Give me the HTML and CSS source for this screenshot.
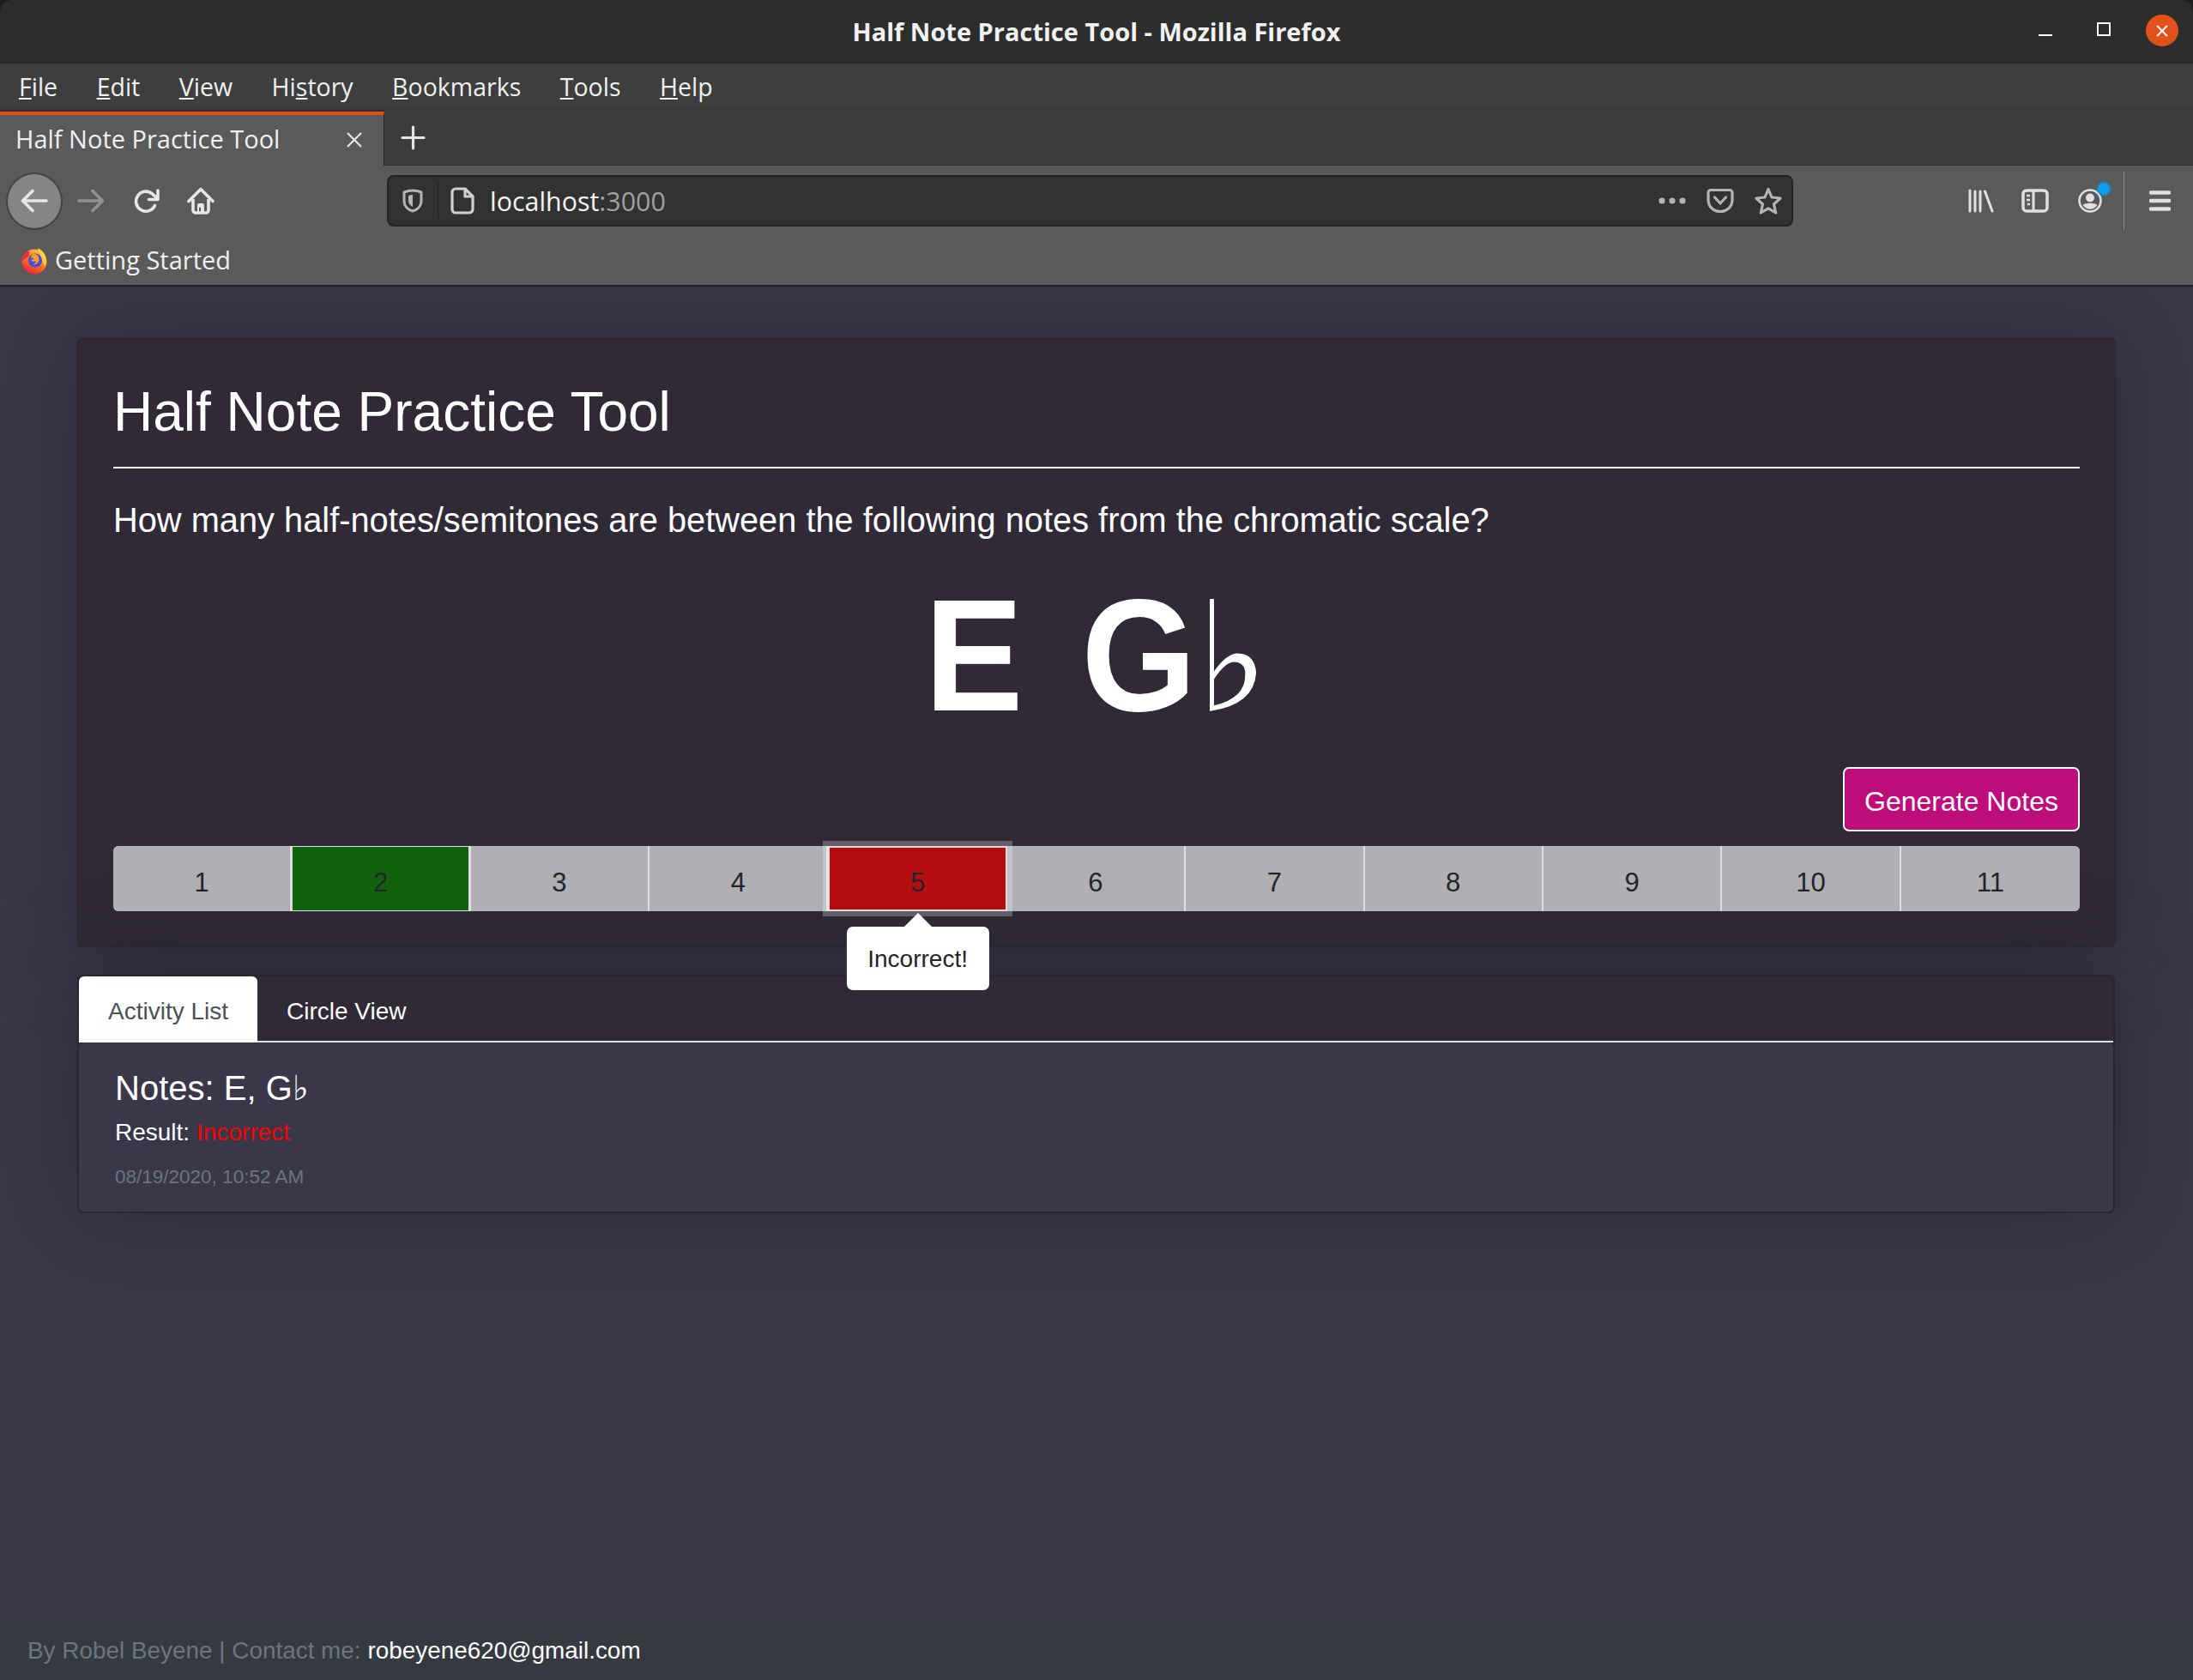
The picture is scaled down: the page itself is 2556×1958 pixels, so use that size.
FILE: index.html
```html
<!DOCTYPE html>
<html lang="en">
<head>
    <meta charset="UTF-8">
    <title>Half Note Practice Tool</title>
    <link rel="stylesheet" href="styles.css">
</head>
<body>
    <header class="browser">
        <div class="titlebar">
            <span class="window-title">Half Note Practice Tool - Mozilla Firefox</span>
            <div class="window-buttons">
                <span class="win-min"></span>
                <span class="win-max"></span>
                <span class="win-close">
                    <svg viewBox="0 0 16 16" width="16" height="16"><path d="M2 2l12 12M14 2L2 14" stroke="#fff" stroke-width="1.800" fill="none"/></svg>
                </span>
            </div>
        </div>
        <nav class="menubar">
            <span><u>F</u>ile</span>
            <span><u>E</u>dit</span>
            <span><u>V</u>iew</span>
            <span>Hi<u>s</u>tory</span>
            <span><u>B</u>ookmarks</span>
            <span><u>T</u>ools</span>
            <span><u>H</u>elp</span>
        </nav>
        <div class="tabbar">
            <div class="tab">
                <span>Half Note Practice Tool</span>
                <svg viewBox="0 0 20 20" width="20" height="20"><path d="M2 2l16 16M18 2L2 18" stroke="#e6e6e6" stroke-width="2.200" fill="none"/></svg>
            </div>
            <svg class="new-tab" viewBox="0 0 29 29" width="29" height="29"><path d="M14.500 2v25M2 14.500h25" stroke="#e6e6e6" stroke-width="3.200" fill="none" stroke-linecap="round"/></svg>
        </div>
        <div class="toolbar">
            <div class="nav-icons">
                <span class="back">
                    <svg viewBox="0 0 32 28" width="32" height="28"><path d="M30 14H3M14 2.500L2.500 14 14 25.500" stroke="#e6e6e6" stroke-width="3.600" fill="none" stroke-linecap="round" stroke-linejoin="round"/></svg>
                </span>
                <svg class="forward" viewBox="0 0 32 28" width="32" height="28"><path d="M2 14h27M18 2.500L29.500 14 18 25.500" stroke="#919191" stroke-width="3.600" fill="none" stroke-linecap="round" stroke-linejoin="round"/></svg>
                <svg class="reload" viewBox="0 0 30 28" width="30" height="28"><path d="M24.500 19.500A11.500 11.500 0 1 1 21 5.500L27 11" stroke="#e6e6e6" stroke-width="3.600" fill="none" stroke-linecap="round"/><path d="M28 2v10.500H17.500" stroke="#e6e6e6" stroke-width="3.600" fill="none" stroke-linecap="round" stroke-linejoin="round"/></svg>
                <svg class="home" viewBox="0 0 32 32" width="32" height="32"><path d="M2 16.500L16 2.500l14 14" stroke="#e6e6e6" stroke-width="3.600" fill="none" stroke-linecap="round" stroke-linejoin="round"/><path d="M7 14v13a3 3 0 0 0 3 3h12a3 3 0 0 0 3-3V14" stroke="#e6e6e6" stroke-width="3.600" fill="none"/><path d="M12 30v-9a2 2 0 0 1 2-2h4a2 2 0 0 1 2 2v9h-4v-5.500a1 1 0 0 0-1-1 1 1 0 0 0-1 1V30z" fill="#e6e6e6"/></svg>
            </div>
            <div class="urlbar">
                <svg class="shield" viewBox="0 0 24 28" width="24" height="28"><path d="M12 2C8 2 5 2.800 2 4v10c0 6.500 5 10.500 10 12 5-1.500 10-5.500 10-12V4c-3-1.200-6-2-10-2z" stroke="#b4b4b4" stroke-width="3" fill="none" stroke-linejoin="round"/><path d="M12 7c-1.800 0-3 .3-5 .9V14c0 3.500 3 6 5 7z" fill="#b4b4b4"/></svg>
                <span class="url-sep"></span>
                <svg class="page-icon" viewBox="0 0 28 32" width="28" height="32"><path d="M17 2H6a4 4 0 0 0-4 4v20a4 4 0 0 0 4 4h16a4 4 0 0 0 4-4V11zM17 2v9h9" stroke="#d0d0d0" stroke-width="3.200" fill="none" stroke-linejoin="round"/></svg>
                <span class="url-text">localhost<span class="url-port">:3000</span></span>
                <div class="url-actions">
                    <svg viewBox="0 0 32 10" width="32" height="10"><circle cx="4" cy="5" r="3.600" fill="#b4b4b4"/><circle cx="16" cy="5" r="3.600" fill="#b4b4b4"/><circle cx="28" cy="5" r="3.600" fill="#b4b4b4"/></svg>
                    <svg viewBox="0 0 32 30" width="32" height="30"><path d="M5 2.500h22a3 3 0 0 1 3 3V14c0 8-6.500 13.500-14 13.500S2 22 2 14V5.500a3 3 0 0 1 3-3z" stroke="#b4b4b4" stroke-width="3.200" fill="none"/><path d="M9.500 11l6.500 7 6.500-7" stroke="#b4b4b4" stroke-width="3.200" fill="none" stroke-linecap="round"/></svg>
                    <svg viewBox="0 0 32 32" width="32" height="32"><path d="M16 2.500l4 9.500 10 1-7.500 7 2.200 10L16 24.800 7.300 30l2.200-10L2 13l10-1z" stroke="#b4b4b4" stroke-width="3.200" fill="none" stroke-linejoin="round"/></svg>
                </div>
            </div>
            <div class="tool-icons">
                <svg class="library" viewBox="0 0 30 28" width="30" height="28"><path d="M2 2v24M8 3v23M14 3v23M19.500 3L28 26" stroke="#e0e0e0" stroke-width="3" fill="none" stroke-linecap="round"/></svg>
                <svg class="sidebar" viewBox="0 0 32 28" width="32" height="28"><rect x="2" y="2" width="28" height="24" rx="4" stroke="#e0e0e0" stroke-width="3.500" fill="none"/><path d="M14 2v24" stroke="#e0e0e0" stroke-width="3"/><path d="M6 8h4M6 13h4M7 18h3" stroke="#e0e0e0" stroke-width="2.500"/></svg>
                <span class="account">
                    <svg viewBox="0 0 28 28" width="28" height="28"><circle cx="14" cy="14" r="12.500" stroke="#e0e0e0" stroke-width="2.500" fill="none"/><circle cx="14" cy="10.500" r="5" fill="#e0e0e0"/><path d="M5.500 19c3-3 14-3 17 0-2 3-5 4.800-8.500 4.800S7.500 22 5.500 19z" fill="#e0e0e0"/></svg>
                    <span class="account-dot"></span>
                </span>
                <span class="tool-sep"></span>
                <svg class="hamburger" viewBox="0 0 25 24" width="25" height="24"><path d="M2 2.500h21M2 12h21M2 21.500h21" stroke="#e0e0e0" stroke-width="4.600" stroke-linecap="round"/></svg>
            </div>
        </div>
        <div class="bookmarks">
            <svg class="fx-logo" viewBox="0 0 30 32" width="30" height="32">
                <defs>
                    <linearGradient id="fxGrad" x1="0.800" y1="0" x2="0.300" y2="1"><stop offset="0" stop-color="#ffc83a"/><stop offset="0.500" stop-color="#ff7a22"/><stop offset="1" stop-color="#e8233f"/></linearGradient>
                </defs>
                <circle cx="15" cy="17" r="14.500" fill="url(#fxGrad)"/>
                <path d="M19 1c6 3 10 8 10 15 0 3-1 5-2 7-2-7-5-14-8-22z" fill="#ffd43a"/>
                <path d="M9 4C3 7 .5 12 .5 17c2-3 5-4 8-6 1-2 1-4 .5-7z" fill="#e8303a"/>
                <circle cx="16" cy="15.500" r="8" fill="#3f4fd6"/>
                <path d="M13 8c4-1 8 2 7.500 7-.5 4-4 6-8 5 3 0 5-2 4.500-4-2 1.500-5 1-6-1.500 2 .5 3-.3 3.500-1.500-1.500 0-3-.5-3.500-1.500.5-1.500 1.200-2.800 2-3.500z" fill="#ff9a2a"/>
            </svg>
            <span>Getting Started</span>
        </div>
    </header>

    <main class="page">
        <section class="card practice">
            <h1 class="heading">Half Note Practice Tool</h1>
            <hr class="rule">
            <p class="lead">How many half-notes/semitones are between the following notes from the chromatic scale?</p>
            <div class="notes">
                <span class="note"><span class="letter">E</span></span>
                <span class="note"><span class="letter">G</span><span class="flat">♭</span></span>
            </div>
            <div class="actions">
                <button class="generate">Generate Notes</button>
            </div>
            <div class="choices">
                <button class="choice">1</button>
                <button class="choice correct">2</button>
                <button class="choice">3</button>
                <button class="choice">4</button>
                <button class="choice incorrect">5
                    <span class="tooltip">Incorrect!</span>
                </button>
                <button class="choice">6</button>
                <button class="choice">7</button>
                <button class="choice">8</button>
                <button class="choice">9</button>
                <button class="choice">10</button>
                <button class="choice">11</button>
            </div>
        </section>

        <section class="card activity">
            <div class="tabs">
                <span class="tab-link active">Activity List</span>
                <span class="tab-link">Circle View</span>
            </div>
            <div class="tab-body">
                <h5 class="entry-notes">Notes: E, G<span class="flat-small">♭</span></h5>
                <p class="entry-result">Result: <span class="bad">Incorrect</span></p>
                <p class="entry-time">08/19/2020, 10:52 AM</p>
            </div>
        </section>
    </main>

    <footer class="footer">
        <span>By Robel Beyene | Contact me: <a class="mail">robeyene620@gmail.com</a></span>
    </footer>
</body>
</html>
```

FILE: styles.css
```css
* {
    box-sizing: border-box;
}

html, body {
    height: 100%;
}

body {
    margin: 0;
    display: flex;
    flex-direction: column;
    min-height: 1958px;
    background: #3a374a;
    font-family: "Liberation Sans", Arial, sans-serif;
    font-size: 26px;
    color: #fff;
}

/* browser window */
.browser {
    font-family: "Open Sans", "Noto Sans", sans-serif;
    color: #f0f0f0;
    background: #1c1c1c;
    flex: none;
    position: relative;
    z-index: 1;
}

.titlebar {
    height: 74px;
    padding-top: 1px;
    background: #2d2d2d;
    border-bottom: 2px solid #262626;
    border-radius: 14px 14px 0 0;
    display: flex;
    align-items: center;
    justify-content: center;
    position: relative;
}

.window-title {
    font-size: 29px;
    font-weight: 700;
    color: #f2f2f2;
}

.window-buttons {
    position: absolute;
    right: 17px;
    top: 17px;
    display: flex;
    align-items: center;
}

.win-min {
    width: 16px;
    height: 2px;
    background: #fff;
    margin-top: 11px;
}

.win-max {
    width: 16px;
    height: 16px;
    border: 2px solid #fff;
    margin: -4px 0 0 52px;
}

.win-close {
    width: 38px;
    height: 37px;
    margin-left: 41px;
    border-radius: 50%;
    background: #e2501c;
    display: flex;
    align-items: center;
    justify-content: center;
}

.menubar {
    height: 54px;
    background: #3e3e3e;
    border-bottom: 1px solid #383838;
    display: flex;
    align-items: center;
    gap: 45.500px;
    padding-left: 22px;
    font-size: 28.500px;
}

.tabbar {
    height: 65px;
    background: #3c3c3c;
    display: flex;
    align-items: stretch;
    border-bottom: 1px solid #2b2b2b;
}

.tab {
    width: 448px;
    background: #5a5a5a;
    border-top: 4px solid #e2501c;
    border-right: 1px solid #2b2b2b;
    box-shadow: 0 -2px 0 #2e2e2e;
    margin-top: 2px;
    margin-bottom: -1px;
    padding: 0 24px 5px 18px;
    display: flex;
    align-items: center;
    justify-content: space-between;
    font-size: 29px;
    white-space: nowrap;
}

.tab svg {
    margin-top: 3px;
}

.new-tab {
    align-self: center;
    margin-left: 19px;
}

.toolbar {
    height: 82px;
    background: #5a5a5a;
    display: flex;
    align-items: center;
}

.nav-icons {
    width: 451px;
    flex: none;
    display: flex;
    align-items: center;
    padding-left: 7px;
}

.back {
    width: 66px;
    height: 67px;
    border-radius: 50%;
    background: #858585;
    border: 2px solid #444;
    display: flex;
    align-items: center;
    justify-content: center;
}

.forward {
    margin-left: 17px;
}

.reload {
    margin-left: 34px;
}

.home {
    margin-left: 32px;
}

.urlbar {
    width: 1639px;
    height: 60px;
    flex: none;
    background: #323232;
    border: 2px solid #242424;
    border-radius: 8px;
    display: flex;
    align-items: center;
    padding: 0 11px 0 16px;
}

.url-sep {
    width: 1px;
    height: 42px;
    background: #222;
    margin-left: 17px;
}

.page-icon {
    margin-left: 14px;
}

.url-text {
    margin-left: 18px;
    font-size: 30.400px;
    color: #f4f4f4;
}

.url-port {
    color: #a0a0a0;
}

.url-actions {
    margin-left: auto;
    display: flex;
    align-items: center;
    gap: 24px;
}

.tool-icons {
    flex: 1;
    display: flex;
    align-items: center;
}

.library {
    margin-left: 204px;
}

.sidebar {
    margin-left: 32px;
}

.account {
    position: relative;
    display: flex;
    margin-left: 34px;
}

.account-dot {
    position: absolute;
    right: -9px;
    top: -7px;
    width: 14px;
    height: 14px;
    border-radius: 50%;
    background: #0a9fef;
    box-shadow: 0 0 0 2px rgba(10, 159, 239, 0.3);
}

.tool-sep {
    width: 1px;
    height: 68px;
    background: #8a8a8a;
    margin-left: 25px;
}

.hamburger {
    margin-left: 29px;
}

.bookmarks {
    height: 59px;
    background: #5a5a5a;
    border-bottom: 2px solid #232323;
    display: flex;
    align-items: center;
    padding: 0 0 2px 25px;
    gap: 9px;
    font-size: 29px;
}

.fx-logo {
    margin-top: 2px;
}

/* page */
.page {
    flex: 1;
    padding: 60px 90px 0;
    display: flex;
    flex-direction: column;
    gap: 32px;
}

.card {
    background: #2f2a36;
    border: 1px solid #2a2631;
    border-radius: 6px;
    box-shadow: 0 0 100px rgba(30, 28, 42, 0.5);
}

.practice {
    padding: 46px 41px 0;
    height: 710px;
}

.heading {
    margin: 0;
    font-size: 64px;
    font-weight: 400;
    line-height: 78px;
}

.rule {
    margin: 25px 0 0;
    border: 0;
    border-top: 2px solid #fff;
}

.lead {
    margin: 37px 0 0;
    font-size: 39.800px;
    line-height: 47px;
}

.notes {
    margin-top: 44px;
    height: 188px;
    display: flex;
    justify-content: center;
    gap: 68px;
    font-size: 172px;
    line-height: 188px;
    font-weight: 700;
}

/* Liberation's capitals are shorter than the reference font */
.letter {
    display: inline-block;
    transform: scaleY(1.080);
    transform-origin: 50% 154px;
}

.flat {
    font-family: "DejaVu Sans", sans-serif;
    font-size: 178px;
    font-weight: 400;
    line-height: 1;
}

.actions {
    margin-top: 32px;
    display: flex;
    justify-content: flex-end;
}

.generate {
    width: 276px;
    height: 75px;
    font-family: inherit;
    font-size: 32px;
    color: #fff;
    background: #bf0c7b;
    border: 2px solid #fff;
    border-radius: 7px;
    padding: 5px 0 0;
}

.choices {
    margin-top: 17px;
    display: grid;
    grid-template-columns: repeat(11, 1fr);
    border-radius: 6px;
    background: #b0afb3;
    height: 76px;
}

.choice {
    position: relative;
    font-family: inherit;
    font-size: 31px;
    color: #212529;
    background: #b0afb3;
    border: 0;
    border-right: 2px solid #dedde0;
    padding: 9px 0 0;
}

.choice:first-child {
    border-radius: 6px 0 0 6px;
}

.choice:last-child {
    border-right: 0;
    border-radius: 0 6px 6px 0;
}

.correct {
    background: #11610f;
    box-shadow: inset 0 0 0 1px #dedde0;
}

.incorrect {
    background: #b40e10;
    border-right: 0;
    box-shadow: 0 0 0 6px rgba(255, 255, 255, 0.25), inset 0 0 0 2px #dedde0;
    z-index: 1;
}

.tooltip {
    position: absolute;
    left: 50%;
    top: 94px;
    width: 166px;
    height: 74px;
    transform: translateX(-50%);
    background: #fff;
    color: #212529;
    font-size: 28px;
    line-height: 76px;
    text-align: center;
    border-radius: 7px;
    white-space: nowrap;
}

.tooltip::before {
    content: "";
    position: absolute;
    left: 50%;
    top: -16px;
    margin-left: -16px;
    border-left: 16px solid transparent;
    border-right: 16px solid transparent;
    border-bottom: 16px solid #fff;
}

.activity {
    border: 2px solid #2a2631;
    height: 278px;
    margin-right: 1px;
}

.tabs {
    height: 77px;
    background: #2f2a36;
    border-bottom: 2px solid #dee2e6;
    display: flex;
}

.tab-link {
    padding: 0 34px;
    line-height: 81px;
    font-size: 28px;
    height: 77px;
    color: #fff;
}

.tab-link.active {
    background: #fff;
    color: #495057;
    border-radius: 6px 6px 0 0;
}

.tab-body {
    height: 197px;
    background: #3a374a;
    border-radius: 6px;
    padding: 29px 42px 0;
}

.entry-notes {
    margin: 0;
    font-size: 40px;
    font-weight: 400;
    line-height: 48px;
}

.flat-small {
    font-family: "DejaVu Sans", sans-serif;
}

.entry-result {
    margin: 7px 0 0;
    font-size: 28px;
    line-height: 42px;
}

.bad {
    color: #ff0000;
}

.entry-time {
    margin: 14px 0 0;
    font-size: 22.500px;
    line-height: 34px;
    color: #6c757d;
}

.footer {
    height: 72px;
    background: #343a40;
    display: flex;
    align-items: center;
    padding: 4px 0 0 32px;
    font-size: 27.900px;
    color: #6c757d;
    flex: none;
    position: relative;
}

.mail {
    color: #fff;
}
```
